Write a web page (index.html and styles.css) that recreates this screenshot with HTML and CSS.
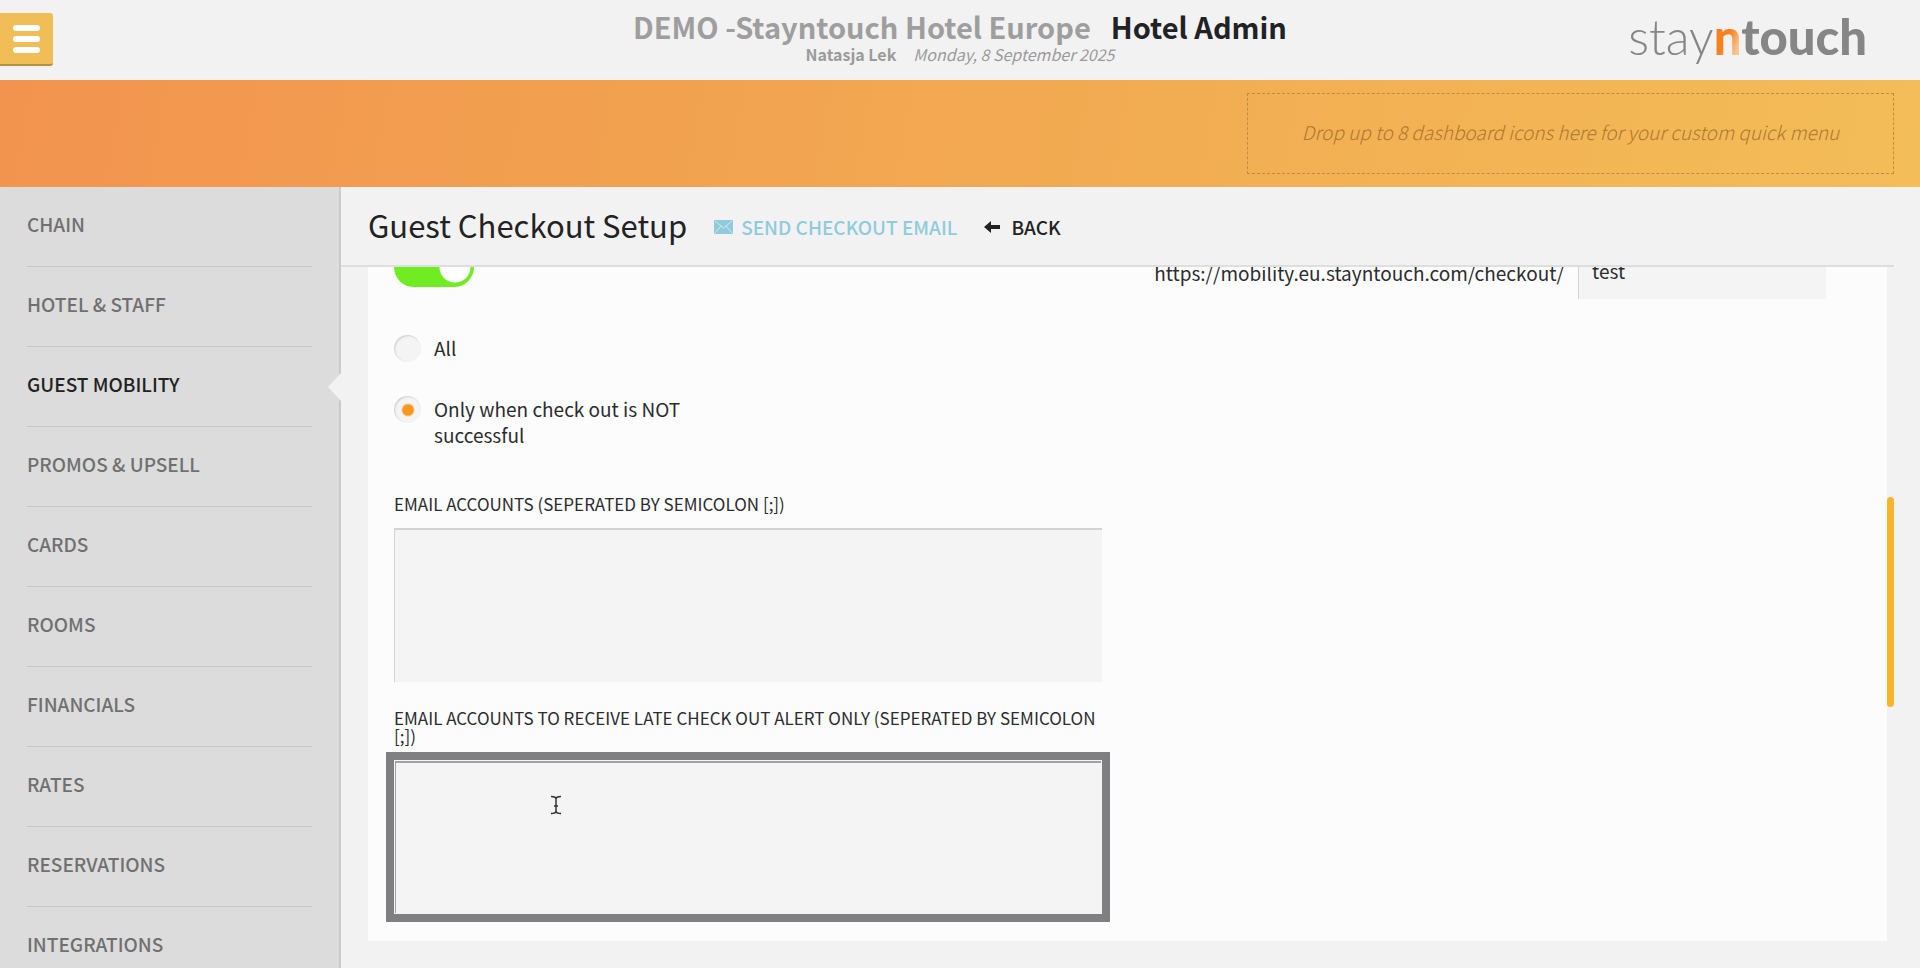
FILE: index.html
```html
<!DOCTYPE html>
<html lang="en">
<head>
<meta charset="utf-8">
<title>Hotel Admin</title>
<link rel="stylesheet" href="styles.css">
</head>
<body>
<header class="topbar">
  <button class="menu-btn" aria-label="Menu"><span class="bar"></span><span class="bar"></span><span class="bar"></span></button>
  <div class="heading">
    <h1 class="title"><span class="hotel">DEMO -Stayntouch Hotel Europe</span><span>Hotel Admin</span></h1>
    <p class="meta"><strong>Natasja Lek</strong><em>Monday, 8 September 2025</em></p>
  </div>
  <div class="logo"><span class="thin">stay</span><span class="n">n</span><span class="thick">touch</span></div>
</header>
<section class="quick"><div class="drop">Drop up to 8 dashboard icons here for your custom quick menu</div></section>
<div class="layout">
  <nav class="sidebar">
    <a class="item" href="#">Chain</a>
    <a class="item" href="#">Hotel &amp; Staff</a>
    <a class="item active" href="#">Guest Mobility</a>
    <a class="item" href="#">Promos &amp; Upsell</a>
    <a class="item" href="#">Cards</a>
    <a class="item" href="#">Rooms</a>
    <a class="item" href="#">Financials</a>
    <a class="item" href="#">Rates</a>
    <a class="item" href="#">Reservations</a>
    <a class="item" href="#">Integrations</a>
  </nav>
  <main class="main">
    <div class="page-head">
      <h2 class="page-title">Guest Checkout Setup</h2>
      <button class="action send"><svg width="19" height="14" viewBox="0 0 19 14"><rect width="19" height="14" rx="1" fill="currentColor"/><path d="M1 1l8.500 7L18 1M1 13l6-7M18 13l-6-7" fill="none" stroke="#f2f2f2" stroke-opacity=".7" stroke-width="1"/></svg>Send checkout email</button>
      <button class="action"><svg width="17" height="12" viewBox="0 0 17 12"><path d="M0 6L7 0V4H16V8H7V12Z" fill="currentColor"/></svg>Back</button>
    </div>
    <div class="scroller">
      <form class="card">
        <div class="col">
          <input class="toggle" type="checkbox" checked aria-label="Send alerts">
          <label class="option"><input class="radio" type="radio" name="alert"><span>All</span></label>
          <label class="option"><input class="radio" type="radio" name="alert" checked><span>Only when check out is NOT successful</span></label>
          <label class="caption" for="emails">Email accounts (seperated by semicolon [;])</label>
          <textarea class="area" id="emails"></textarea>
          <label class="caption late" for="late">Email accounts to receive late check out alert only (seperated by semicolon [;])</label>
          <div class="area-wrap">
            <textarea class="area focused" id="late"></textarea>
            <svg class="cursor" width="12" height="20" viewBox="0 0 12 20"><path d="M1 1.500Q6 1.500 6 4Q6 1.500 11 1.500M6 4V16M1 18.500Q6 18.500 6 16Q6 18.500 11 18.500M4 11H8" fill="none" stroke="#333" stroke-width="1.500"/></svg>
          </div>
        </div>
        <div class="url-row"><label for="slug">https://mobility.eu.stayntouch.com/checkout/</label><input class="slug" id="slug" type="text" value="test"></div>
      </form>
      <span class="thumb"></span>
    </div>
  </main>
</div>
</body>
</html>
```
FILE: styles.css
```css
* { box-sizing: border-box; }
body {
  margin: 0;
  height: 100vh;
  display: flex;
  flex-direction: column;
  overflow: hidden;
  background: #f2f2f2;
  color: #2b2c2e;
  font: 19px/26px "Noto Sans CJK SC", "Noto Sans", sans-serif;
}
h1, h2, p { margin: 0; }
button { border: 0; background: none; padding: 0; font: inherit; color: inherit; }
a { color: inherit; text-decoration: none; }

.topbar {
  flex: none;
  display: grid;
  grid-template-columns: 1fr auto 1fr;
  height: 80px;
}
.menu-btn {
  display: flex;
  flex-direction: column;
  align-items: center;
  justify-content: center;
  gap: 5px;
  width: 53px;
  height: 53px;
  margin-top: 13px;
  background: #f1bd57;
  border-bottom: 2px solid #b69045;
  border-radius: 0 3px 3px 0;
}
.bar { width: 27px; height: 6px; border-radius: 3px; background: #fff; }
.heading { text-align: center; padding-top: 8px; }
.title { font-size: 29px; line-height: 36px; font-weight: 700; color: #212224; }
.hotel { color: #9e9e9e; margin-right: 20px; }
.meta { font-size: 16px; line-height: 20px; color: #9b9b9b; }
.meta strong { margin-right: 17px; }
.logo {
  justify-self: end;
  margin-right: 53px;
  font-family: Lato, sans-serif;
  font-size: 49px;
  line-height: 72px;
  color: #868686;
}
.thin { font-weight: 300; }
.thick { font-weight: 900; }
.n {
  font-weight: 900;
  color: transparent;
  background: linear-gradient(115deg, #f58220 50%, #fbc491 80%);
  background-clip: text;
}

.quick {
  flex: none;
  display: flex;
  justify-content: flex-end;
  height: 107px;
  padding: 13px 26px;
  background: linear-gradient(100deg, #f2944f, #f2a24f 35%, #f3bd58);
}
.drop {
  width: 647px;
  border: 1px dashed #c08c3e;
  text-align: center;
  line-height: 76px;
  font-weight: 300;
  font-style: italic;
  color: #ad7830;
}

.layout { flex: 1; min-height: 0; display: flex; }
.sidebar {
  flex: none;
  width: 341px;
  padding: 0 27px;
  background: #dcdcdc;
  border-right: 2px solid #cbcbcb;
  font-weight: 500;
  text-transform: uppercase;
  color: #707070;
}
.item {
  position: relative;
  display: block;
  height: 80px;
  padding-top: 24px;
  border-bottom: 1px solid #c6c6c6;
}
.active { color: #222; }
.active::after {
  content: "";
  position: absolute;
  right: -29px;
  top: 26px;
  border: solid transparent;
  border-width: 14px 13px 14px 0;
  border-right-color: #f2f2f2;
}

.main { flex: 1; min-width: 0; display: flex; flex-direction: column; padding-left: 27px; }
.page-head {
  flex: none;
  display: flex;
  align-items: center;
  gap: 27px;
  height: 80px;
  margin: 0 26px 0 -27px;
  padding-left: 27px;
  border-bottom: 2px solid #dedede;
}
.page-title { font-size: 31px; line-height: 40px; font-weight: 400; color: #222; padding-bottom: 3px; }
.action {
  display: flex;
  align-items: center;
  gap: 10px;
  padding-top: 2px;
  font-weight: 500;
  text-transform: uppercase;
  color: #222;
}
.send { gap: 8px; color: #8fcbdc; }

.scroller { position: relative; flex: 1; min-height: 0; overflow: hidden; margin-right: 26px; }
.card {
  display: grid;
  grid-template-columns: 708px auto;
  justify-content: space-between;
  align-items: start;
  margin-right: 7px;
  padding: 0 61px 27px 26px;
  background: #fcfcfc;
}
.col { display: flex; flex-direction: column; align-items: flex-start; }
.toggle {
  appearance: none;
  width: 80px;
  height: 40px;
  margin: -20px 0 48px;
  border-radius: 20px;
  background: radial-gradient(circle at 61px 20px, #fff 15px, #6fec22 16px);
}
.option { display: flex; gap: 13px; width: 320px; margin-bottom: 34px; }
.radio {
  appearance: none;
  flex: none;
  width: 27px;
  height: 27px;
  margin: 0;
  border-radius: 50%;
  background: #f4f4f4;
  box-shadow: inset 1px 1px 2px #cfcfcf;
}
.radio:checked { background: radial-gradient(circle at 14px 14px, #f7981d 5px, #f4f4f4 7px); }
.caption { font-size: 17px; line-height: 18px; text-transform: uppercase; margin: 13px 0 15px; }
.area {
  display: block;
  width: 100%;
  height: 154px;
  resize: none;
  border: solid #d3d3d3;
  border-width: 2px 0 0 1px;
  background: #f4f4f4;
}
.late { margin: 27px 0 15px; }
.area-wrap { position: relative; width: 100%; }
.focused {
  border: 1px solid #f4f4f4;
  outline: 8px solid #808082;
  outline-offset: 0;
  box-shadow: inset 1px 2px 0 #a2a2a6;
}
.cursor { position: absolute; left: 156px; top: 35px; }
.url-row { display: flex; align-items: center; gap: 14px; margin-top: -20px; }
.slug {
  width: 248px;
  height: 52px;
  padding: 0 13px 8px;
  border: solid #d3d3d3;
  border-width: 2px 0 0 1px;
  background: #f4f4f4;
  font: inherit;
  color: inherit;
}
.thumb {
  position: absolute;
  right: 0;
  top: 230px;
  width: 7px;
  height: 210px;
  border-radius: 4px;
  background: #f7b52c;
}
```
